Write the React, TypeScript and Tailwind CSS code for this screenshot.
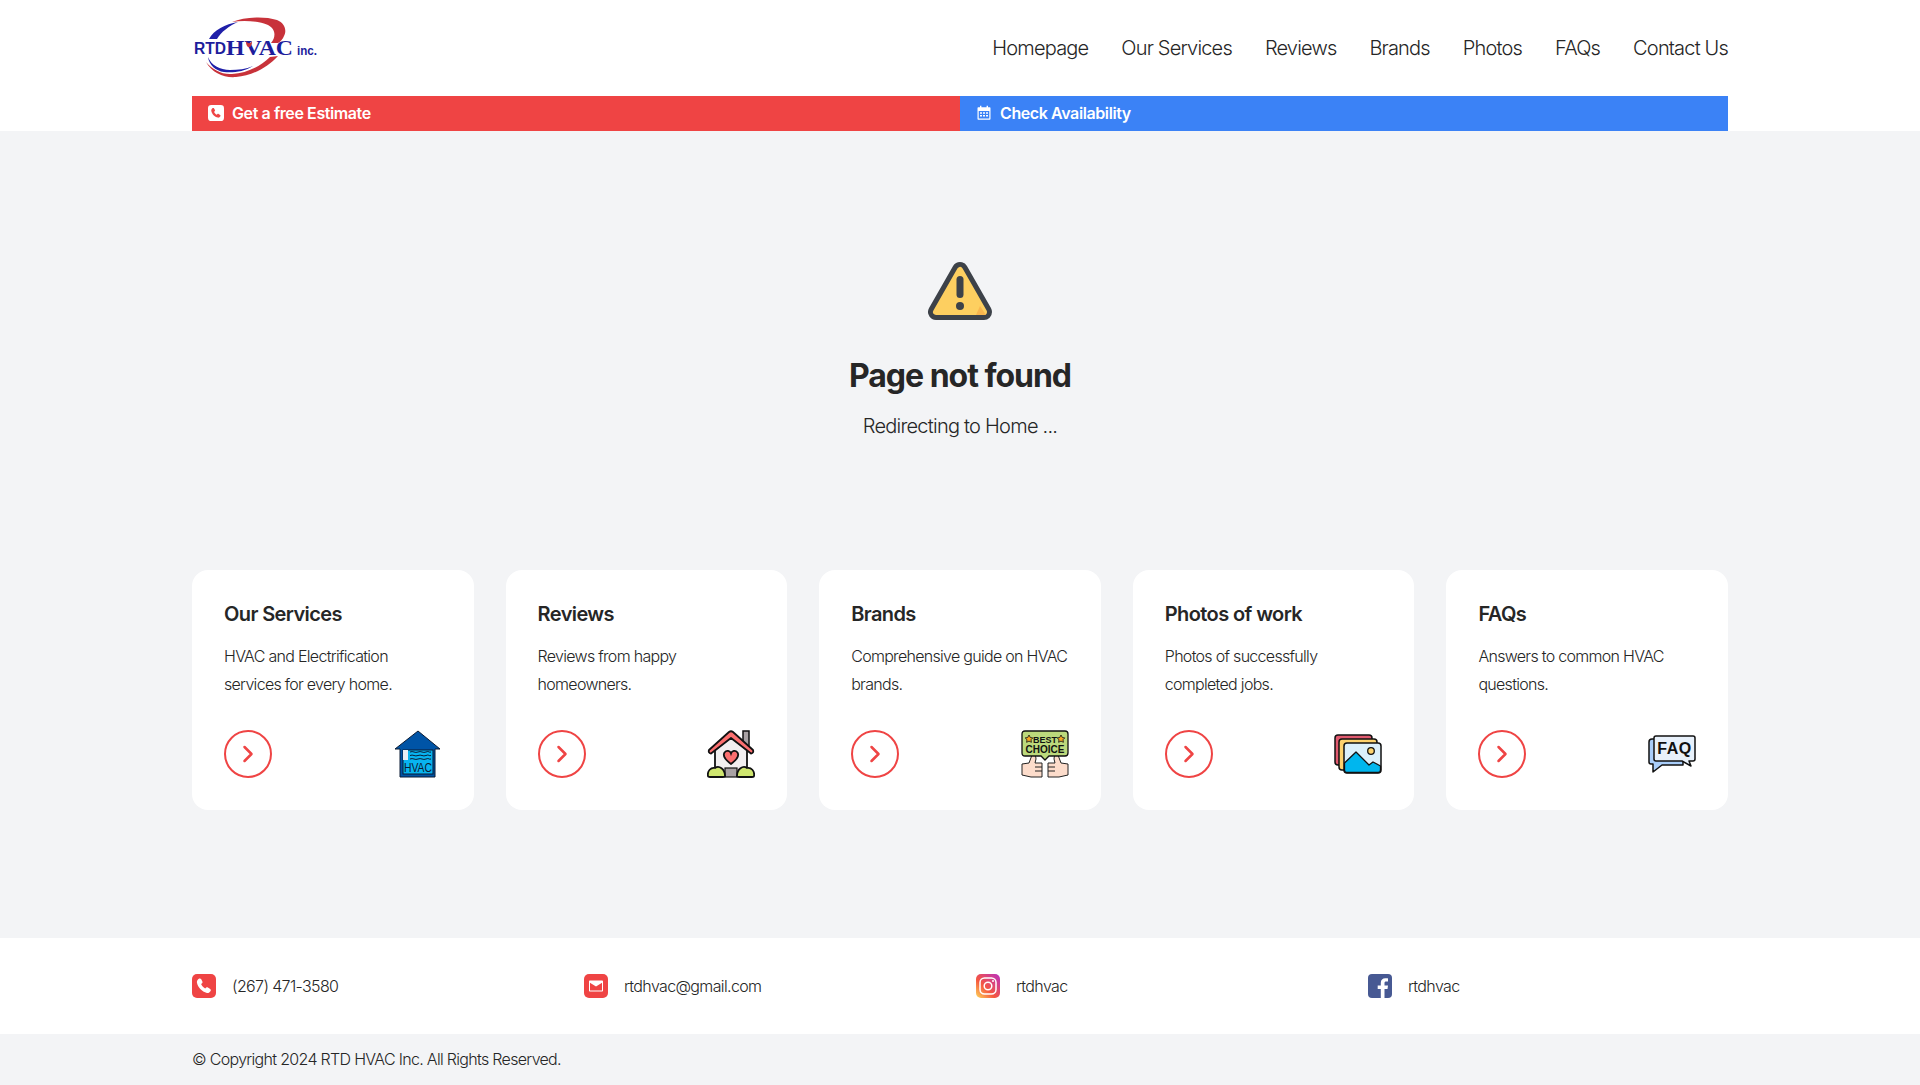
import React from 'react';

const font = { fontFamily: 'Inter, sans-serif' };

const navLinks = ['Homepage', 'Our Services', 'Reviews', 'Brands', 'Photos', 'FAQs', 'Contact Us'];

const Logo = () => (
  <svg width="126" height="62" viewBox="0 0 126 62">
    <path d="M17 22 C22 13 33 7 46 5 C37 9 29 15 25 22 Z" fill="#1f1fa8" />
    <path d="M40 5 C52 0 72 -1 85 3 C93 6 95 14 92 19 C91 22 88 25 86 26 L79 26 C84 20 84 12 76 8 C66 4 52 3 40 5 Z" fill="#c8323a" />
    <path d="M16 40 C19 48 28 53 38 53 C46 53 54 52 61 49 C52 55 40 56 32 55 C24 54 17 48 16 40 Z" fill="#1f1fa8" />
    <path d="M14 45 C20 56 32 61 44 60 C60 59 76 50 86 39 L78 40 C68 50 54 56 40 57 C30 58 20 52 14 45 Z" fill="#c8323a" />
    <text x="2" y="37" textLength="32" lengthAdjust="spacingAndGlyphs" fontFamily="'Liberation Sans', sans-serif" fontWeight="700" fontSize="16" fill="#1d1d9c">RTD</text>
    <text x="34" y="38" textLength="67" lengthAdjust="spacingAndGlyphs" fontFamily="'Liberation Serif', serif" fontWeight="700" fontSize="20" fill="#1d1d9c">HVAC</text>
    <path d="M54 24 C56 27 58 27 60 24 C60 28 59 30 57 30 C55 30 54 28 54 24 Z" fill="#c8323a" />
    <text x="105" y="38" textLength="20" lengthAdjust="spacingAndGlyphs" fontFamily="'Liberation Sans', sans-serif" fontWeight="700" fontSize="12" fill="#1d1d9c">inc.</text>
  </svg>
);

const PhoneBadge = ({ size, bg, fg }: { size: number; bg: string; fg: string }) => (
  <svg width={size} height={size} viewBox="0 0 24 24">
    <rect width="24" height="24" rx="5" fill={bg} />
    <path d="M7.2 4.600c.7-.4 1.500-.2 1.900.5l1.300 2.400c.3.6.2 1.300-.3 1.700l-1 .9c.7 1.900 2.200 3.500 4.100 4.400l1-.9c.5-.4 1.200-.5 1.700-.1l2.300 1.500c.6.4.8 1.300.4 1.900-.9 1.500-2.200 2.300-3.700 2-5-1.100-9.200-5.400-10-10.300-.2-1.500.8-3 2.300-4z" fill={fg} />
  </svg>
);

const CalendarGlyph = () => (
  <svg width="16" height="16" viewBox="0 0 16 16" fill="#fff">
    <path d="M4 .8h1.400v2.400H4zM10.600 .8H12v2.400h-1.400z" />
    <path d="M2.500 2.200h11c.6 0 1 .4 1 1v10.600c0 .6-.4 1-1 1h-11c-.6 0-1-.4-1-1V3.200c0-.6.4-1 1-1zM2.700 6v7.600h10.600V6z" fillRule="evenodd" />
    <path d="M4 7.300h2v1.500H4zM7 7.300h2v1.500H7zM10 7.300h2v1.500h-2zM4 10h2v1.500H4zM7 10h2v1.500H7zM10 10h2v1.500h-2z" />
  </svg>
);

const WarningIcon = () => (
  <svg width="64" height="60" viewBox="0 0 64 60">
    <path d="M32 9 L8 51 L56 51 Z" fill="#3d4249" stroke="#3d4249" strokeWidth="16" strokeLinejoin="round" />
    <path d="M32 9 L8 51 L56 51 Z" fill="#fdcf60" stroke="#fdcf60" strokeWidth="6" strokeLinejoin="round" />
    <path d="M52 45 L58 54 L48 54 Z" fill="#f8b54e" />
    <rect x="28.500" y="15" width="7" height="22" rx="3.500" fill="#3d4249" />
    <circle cx="32" cy="45" r="4" fill="#3d4249" />
  </svg>
);

const HvacIcon = () => (
  <svg width="48" height="48" viewBox="0 0 48 48">
    <path d="M24 1 L46 19 L41 19 L41 47 L6 47 L6 19 L1 19 Z" fill="#0054a6" stroke="#0b1b33" strokeWidth="1" strokeLinejoin="round" />
    <rect x="9" y="20" width="30" height="24" fill="#08b4f0" stroke="#0b1b33" strokeWidth="1" />
    <path d="M9 20h5v10H9z" fill="#e8eef5" />
    <path d="M16 22c3-1.500 5 1.500 8 0s5 1.500 8 0 3 1 5 0M16 25.500c3-1.500 5 1.500 8 0s5 1.500 8 0 3 1 5 0M16 29c3-1.500 5 1.500 8 0s5 1.500 8 0 3 1 5 0" fill="none" stroke="#0b1b33" strokeWidth="1" />
    <text x="10" y="42" textLength="28" lengthAdjust="spacingAndGlyphs" fontFamily="'Liberation Sans', sans-serif" fontSize="12" fill="#0b1b33">HVAC</text>
  </svg>
);

const HouseIcon = () => (
  <svg width="48" height="48" viewBox="0 0 48 48">
    <rect x="36" y="1" width="6" height="16" fill="#a9a2a4" stroke="#111" strokeWidth="1.500" />
    <path d="M8 20 L24 6 L40 20 V44 H8 Z" fill="#f2eff0" stroke="#111" strokeWidth="1.800" />
    <path d="M2 20 L22 2 Q24 0.500 26 2 L46 20 Q47 23 44 23.500 L24 8 L4 23.500 Q1 23 2 20 Z" fill="#fb6f6f" stroke="#111" strokeWidth="1.800" strokeLinejoin="round" />
    <path d="M24 34 C17 29 16 25 17.500 22.500 C19.500 20 23 20.500 24 23.500 C25 20.500 28.500 20 30.500 22.500 C32 25 31 29 24 34 Z" fill="#fb6f6f" stroke="#111" strokeWidth="1.800" />
    <rect x="18" y="38" width="12" height="9" fill="#a9a2a4" stroke="#111" strokeWidth="1.200" />
    <path d="M1 46 C0 41 4 37 8 38 C12 35 18 39 18 46 Q18 47 16 47 H3 Q1 47 1 46 Z" fill="#cfe66f" stroke="#111" strokeWidth="1.800" />
    <path d="M47 46 C48 41 44 37 40 38 C36 35 30 39 30 46 Q30 47 32 47 H45 Q47 47 47 46 Z" fill="#cfe66f" stroke="#111" strokeWidth="1.800" />
  </svg>
);

const BestChoiceIcon = () => (
  <svg width="48" height="48" viewBox="0 0 48 48">
    <path d="M1 34 L8 33 L11 25 Q15 24 15 29 L14 33 H21 V47 H10 L1 45 Z" fill="#fcdccb" stroke="#222" strokeWidth="1" />
    <path d="M47 34 L40 33 L37 25 Q33 24 33 29 L34 33 H27 V47 H38 L47 45 Z" fill="#fcdccb" stroke="#222" strokeWidth="1" />
    <path d="M14 37h7M14 41h7M27 37h7M27 41h7" stroke="#222" strokeWidth="1" />
    <path d="M4 1 H44 Q47 1 47 4 V23 Q47 26 44 26 H28 L24 30 L20 26 H4 Q1 26 1 23 V4 Q1 1 4 1 Z" fill="#bcd97c" stroke="#111" strokeWidth="1.300" />
    <text x="24" y="12.500" textAnchor="middle" fontFamily="'Liberation Sans', sans-serif" fontWeight="700" fontSize="9" fill="#111">BEST</text>
    <text x="24" y="22.500" textAnchor="middle" fontFamily="'Liberation Sans', sans-serif" fontWeight="700" fontSize="10" fill="#111">CHOICE</text>
    <path d="M8 5 l1.300 2.500 l2.500 .4 l-1.800 1.800 l.4 2.600 l-2.400-1.200 l-2.400 1.200 l.4-2.600 l-1.800-1.800 l2.500-.4 Z" fill="#f5a623" stroke="#111" strokeWidth=".8" />
    <path d="M40 5 l1.300 2.500 l2.500 .4 l-1.800 1.800 l.4 2.600 l-2.400-1.200 l-2.400 1.200 l.4-2.600 l-1.800-1.800 l2.500-.4 Z" fill="#f5a623" stroke="#111" strokeWidth=".8" />
  </svg>
);

const PhotosIcon = () => (
  <svg width="48" height="48" viewBox="0 0 48 48">
    <rect x="1" y="5" width="37" height="30" rx="3" fill="#e15a6f" stroke="#111" strokeWidth="1.500" />
    <rect x="5" y="9" width="38" height="31" rx="3" fill="#fdd26e" stroke="#111" strokeWidth="1.500" />
    <rect x="10" y="13" width="37" height="30" rx="3" fill="#dcf0fb" stroke="#111" strokeWidth="1.500" />
    <path d="M10.500 33 L22 22 L35 35 L39 32 L46.500 36 V40 Q46.500 42.500 44 42.500 H13 Q10.500 42.500 10.500 40 Z" fill="#00b6ee" stroke="#111" strokeWidth="1.300" strokeLinejoin="round" />
    <circle cx="37" cy="21" r="3.300" fill="#fdd26e" stroke="#111" strokeWidth="1.300" />
  </svg>
);

const FaqIcon = () => (
  <svg width="48" height="48" viewBox="0 -2 48 48">
    <path d="M7 7 H4 Q1 7 1 10 V30 Q1 32 3 32 H5 V40 L14 33 H35 V28 H7 Z" fill="#a9cdf9" stroke="#111" strokeWidth="1.500" strokeLinejoin="round" />
    <path d="M8 4 Q6 4 6 6 V27 Q6 29 8 29 H34 L43 34 L41 29 H45 Q47 29 47 27 V6 Q47 4 45 4 Z" fill="#e8f1fb" stroke="#111" strokeWidth="1.500" strokeLinejoin="round" />
    <text x="26.500" y="22" textAnchor="middle" fontFamily="'Liberation Sans', sans-serif" fontSize="16" fontWeight="700" fill="#111" letterSpacing=".5">FAQ</text>
  </svg>
);

const InstagramIcon = () => (
  <svg width="24" height="24" viewBox="0 0 24 24">
    <defs>
      <linearGradient id="ig" x1="0" y1="1" x2="1" y2="0">
        <stop offset="0" stopColor="#fdd85b" />
        <stop offset=".4" stopColor="#f6573f" />
        <stop offset="1" stopColor="#b92fc0" />
      </linearGradient>
    </defs>
    <rect width="24" height="24" rx="5" fill="url(#ig)" />
    <rect x="4" y="4" width="16" height="16" rx="4.500" fill="none" stroke="#fff" strokeWidth="1.500" />
    <circle cx="12" cy="12" r="3.800" fill="none" stroke="#fff" strokeWidth="1.500" />
    <circle cx="17" cy="7" r="1" fill="#fff" />
  </svg>
);

const cards = [
  { title: 'Our Services', text: 'HVAC and Electrification services for every home.', icon: <HvacIcon /> },
  { title: 'Reviews', text: 'Reviews from happy homeowners.', icon: <HouseIcon /> },
  { title: 'Brands', text: 'Comprehensive guide on HVAC brands.', icon: <BestChoiceIcon /> },
  { title: 'Photos of work', text: 'Photos of successfully completed jobs.', icon: <PhotosIcon /> },
  { title: 'FAQs', text: 'Answers to common HVAC questions.', icon: <FaqIcon /> },
];

const App: React.FC = () => {
  return (
    <div style={font} className="min-h-[1085px] bg-[#f3f4f6] text-[#262626]">
      <header className="bg-white">
        <div className="w-[1536px] mx-auto">
          <div className="h-[96px] flex items-center justify-between">
            <Logo />
            <nav className="flex gap-[33px] text-[20px] tracking-[-0.041em] font-light">
              {navLinks.map(link => (
                <a key={link} className="leading-7">{link}</a>
              ))}
            </nav>
          </div>
          <div className="flex h-[35px] text-white text-[16px] font-semibold tracking-[-0.025em]">
            <div className="w-1/2 bg-[#ef4444] flex items-center gap-2 pl-4 pb-[1px]">
              <PhoneBadge size={16} bg="#fff" fg="#ef4444" />
              <span>Get a free Estimate</span>
            </div>
            <div className="w-1/2 bg-[#3b82f6] flex items-center gap-2 pl-4 pb-[1px]">
              <CalendarGlyph />
              <span>Check Availability</span>
            </div>
          </div>
        </div>
      </header>

      <main className="w-[1536px] mx-auto">
        <div className="flex flex-col items-center pt-[130px]">
          <WarningIcon />
          <h1 className="mt-[35px] text-[32px] leading-10 font-bold tracking-[-0.032em]">Page not found</h1>
          <p className="mt-[16px] text-[20px] leading-7 font-light tracking-[-0.038em]">Redirecting to Home ...</p>
        </div>

        <div className="mt-[130px] grid grid-cols-5 gap-8">
          {cards.map(card => (
            <div key={card.title} className="h-[240px] bg-white rounded-2xl pt-[30px] px-8">
              <h3 className="text-[20px] leading-7 font-semibold tracking-[-0.03em]">{card.title}</h3>
              <p className="mt-[14px] text-[16px] leading-7 font-light tracking-[-0.044em]">{card.text}</p>
              <div className="mt-[32px] flex items-center justify-between">
                <div className="w-12 h-12 rounded-full border-2 border-[#ef4444] flex items-center justify-center">
                  <svg width="20" height="20" viewBox="0 0 20 20" fill="none" stroke="#ef4444" strokeWidth="2.500" strokeLinecap="round" strokeLinejoin="round">
                    <path d="M6.500 3 L13.500 10 L6.500 17" />
                  </svg>
                </div>
                {card.icon}
              </div>
            </div>
          ))}
        </div>
      </main>

      <footer className="mt-[128px]">
        <div className="bg-white h-[96px]">
          <div className="w-[1536px] mx-auto h-full grid grid-cols-[392px_392px_392px_1fr] items-center text-[16px] font-light tracking-[-0.04em]">
            <div className="flex items-center gap-4">
              <PhoneBadge size={24} bg="#ef4444" fg="#fff" />
              <span>(267) 471-3580</span>
            </div>
            <div className="flex items-center gap-4">
              <svg width="24" height="24" viewBox="0 0 24 24">
                <rect width="24" height="24" rx="5" fill="#ef4444" />
                <path d="M6 6.500h12c.6 0 1 .4 1 1v9c0 .6-.4 1-1 1H6c-.6 0-1-.4-1-1v-9c0-.6.4-1 1-1zm0 2.200v7.800h12V8.700l-6 3.800z" fill="#fff" fillRule="evenodd" />
              </svg>
              <span>rtdhvac@gmail.com</span>
            </div>
            <div className="flex items-center gap-4">
              <InstagramIcon />
              <span>rtdhvac</span>
            </div>
            <div className="flex items-center gap-4">
              <svg width="24" height="24" viewBox="0 0 24 24">
                <rect width="24" height="24" rx="4" fill="#475993" />
                <path d="M16.500 24v-9h3l.5-3.600h-3.500V9.300c0-1 .3-1.700 1.800-1.700H20V4.400c-.4 0-1.500-.1-2.700-.1-2.700 0-4.500 1.600-4.500 4.600v2.500H9.700V15h3.100v9z" fill="#fff" />
              </svg>
              <span>rtdhvac</span>
            </div>
          </div>
        </div>
        <div className="w-[1536px] mx-auto h-[50px] flex items-center text-[16px] font-light tracking-[-0.043em]">
          © Copyright 2024 RTD HVAC Inc. All Rights Reserved.
        </div>
      </footer>
    </div>
  );
};

export default App;
